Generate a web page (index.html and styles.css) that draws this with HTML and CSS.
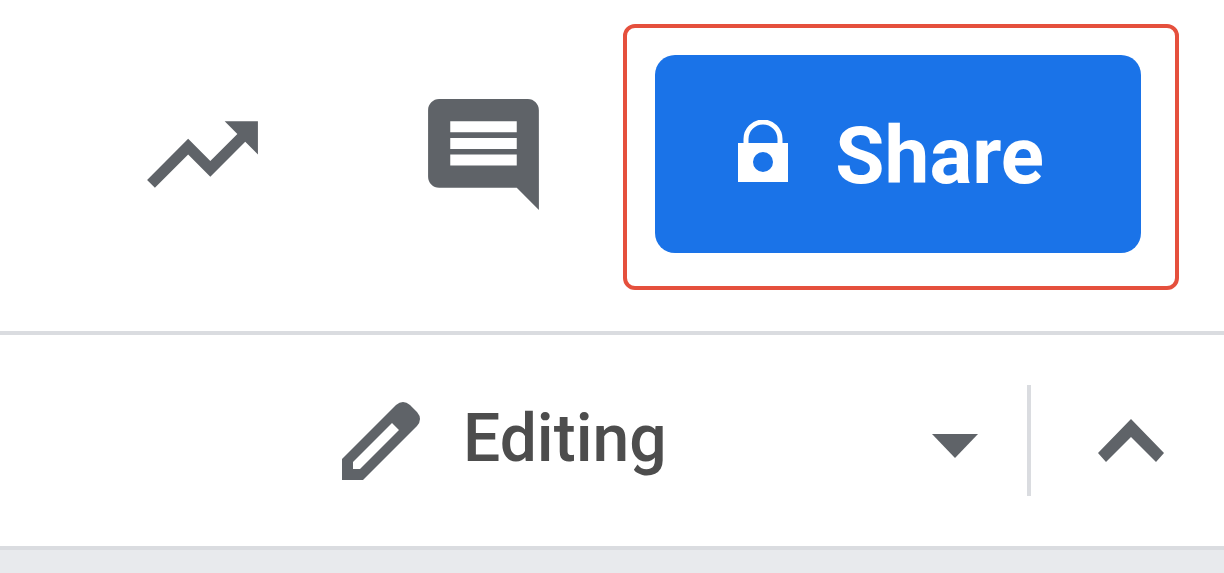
FILE: index.html
```html
<!DOCTYPE html>
<html lang="en">

<head>
    <meta charset="UTF-8">
    <meta name="viewport" content="width=device-width, initial-scale=1.0">
    <title>Document</title>
    <link rel="stylesheet" href="styles.css">
</head>

<body>

    <header class="header">
        <button class="icon-button" type="button" aria-label="Activity">
            <svg class="header-icon" viewBox="0 0 24 24">
                <path d="M16 6l2.29 2.29-4.88 4.88-4-4L2 16.59 3.41 18l6-6 4 4 6.3-6.29L22 12V6z" />
            </svg>
        </button>
        <button class="icon-button" type="button" aria-label="Comments">
            <svg class="header-icon" viewBox="0 0 24 24">
                <path d="M21.99 4c0-1.1-.89-2-1.99-2H4c-1.1 0-2 .9-2 2v12c0 1.1.9 2 2 2h14l4 4-.01-18zM18 14H6v-2h12v2zm0-3H6V9h12v2zm0-3H6V6h12v2z" />
            </svg>
        </button>
        <div class="highlight">
            <button class="share-button" type="button">
                <svg class="lock-icon" viewBox="0 0 52 62">
                    <path class="shackle" d="M9 25v-6a17 17 0 0 1 34 0v6" />
                    <path class="lock-body" d="M1 23h50v39H1zM26 32a10 10 0 1 0 0 20 10 10 0 1 0 0-20z" />
                </svg>
                <span class="share-label">Share</span>
            </button>
        </div>
    </header>

    <div class="toolbar">
        <div class="mode">
            <svg class="pencil-icon" viewBox="0 0 78 78">
                <path d="M0 57L54 3q7-6 14 0l7 7q6 7 0 14L21 78H0zM11 60v7h7l39-39-7-7z" />
            </svg>
            <div class="mode-picker">
                <select class="mode-select" aria-label="Mode">
                    <option>Editing</option>
                </select>
                <svg class="arrow-icon" viewBox="0 0 46 24">
                    <path d="M0 0h46L23 24z" />
                </svg>
            </div>
        </div>
        <div class="divider"></div>
        <button class="icon-button" type="button" aria-label="Hide the menus">
            <svg class="chevron-icon" viewBox="0 0 66 44">
                <path d="M33 0l33 34-8 9-25-25L8 43l-8-9z" />
            </svg>
        </button>
    </div>

</body>

</html>
```

FILE: styles.css
```css
* {
    box-sizing: border-box;
}

body {
    margin: 0;
    min-height: 100vh;
    background-color: #e8eaed;
    font-family: Roboto, 'Liberation Sans', sans-serif;
}

button,
select {
    margin: 0;
    padding: 0;
    border: none;
    background: none;
    font-family: inherit;
    cursor: pointer;
}

svg {
    display: block;
    fill: #5f6368;
}

.header {
    display: flex;
    align-items: center;
    justify-content: flex-end;
    padding: 24px 45px 41px 0;
    background-color: #fff;
    border-bottom: 4px solid #dadce0;
}

.header .icon-button {
    padding-bottom: 6px;
    margin-right: 148px;
}

.header .icon-button + .icon-button {
    margin-right: 73px;
}

.header-icon {
    width: 133px;
    height: 133px;
}

.highlight {
    padding: 27px 34px 33px 28px;
    border: 4px solid #e5503d;
    border-radius: 12px;
}

.share-button {
    display: flex;
    align-items: center;
    gap: 46px;
    height: 198px;
    padding: 0 97px 0 82px;
    background-color: #1a73e8;
    border-radius: 20px;
    color: #fff;
    font-size: 80px;
    font-weight: 700;
    line-height: 92px;
}

.share-label {
    padding-top: 4px;
}

.lock-icon {
    width: 52px;
    height: 62px;
    margin-bottom: 6px;
}

.lock-body {
    fill: #fff;
    fill-rule: evenodd;
}

.shackle {
    fill: none;
    stroke: #fff;
    stroke-width: 5;
}

.toolbar {
    display: flex;
    align-items: center;
    justify-content: flex-end;
    height: 215px;
    padding-right: 60px;
    background-color: #fff;
    border-bottom: 4px solid #dadce0;
}

.mode {
    display: flex;
    align-items: center;
    gap: 43px;
}

.pencil-icon {
    width: 78px;
    height: 78px;
}

/* the arrow shares the cell of the select */
.mode-picker {
    display: grid;
    align-items: center;
    width: 515px;
}

.mode-select,
.arrow-icon {
    grid-area: 1 / 1;
}

.mode-select {
    appearance: none;
    padding-bottom: 4px;
    color: #4d4d4d;
    font-size: 66px;
    font-weight: 500;
    line-height: 80px;
}

.arrow-icon {
    justify-self: end;
    width: 46px;
    height: 24px;
    margin-top: 10px;
    pointer-events: none;
}

.divider {
    width: 4px;
    height: 111px;
    margin: 0 67px 0 49px;
    background-color: #dadce0;
}

.chevron-icon {
    width: 66px;
    height: 44px;
}
```
